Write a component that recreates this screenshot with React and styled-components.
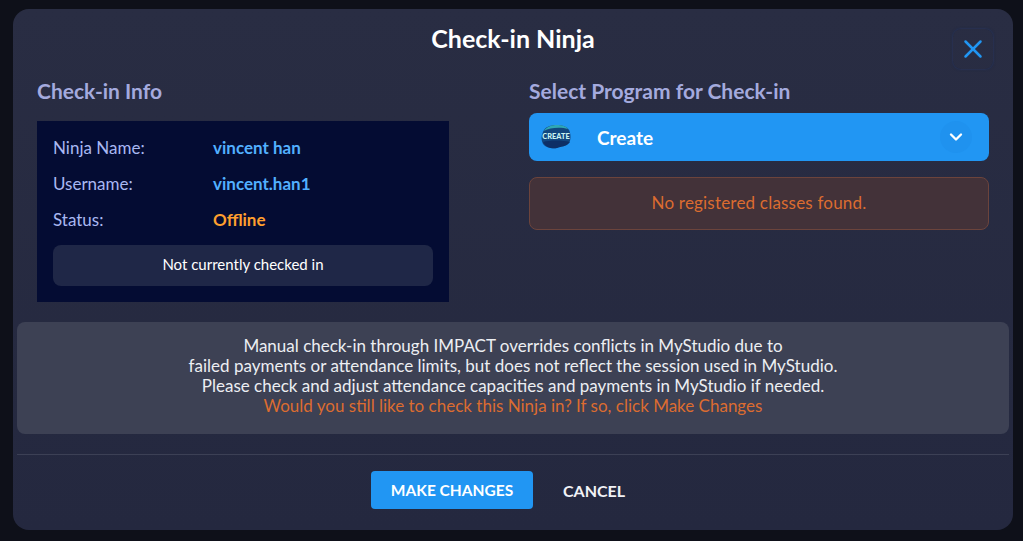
import React from 'react'
import styled, { createGlobalStyle } from 'styled-components'
import { X, ChevronDown } from 'lucide-react'

const GlobalStyle = createGlobalStyle`
    html, body {
        margin: 0;
        height: 100%;
        background: #0e1019;
        font-family: "Lato", "Noto Sans", sans-serif;
    }
`

function ProgramLogo() {
    return (
        <svg width="32" height="28" viewBox="0 0 32 28">
            <path d="M3 9 C5 4 10 2 16 2 C21 2 27 3 29 7 C31 11 31 17 29 20 C26 24 21 23 17 25 C12 26 6 25 3 21 C1 17 1 13 3 9 Z" fill="#12467f" />
            <path d="M4 8 C7 3 12 2 17 2 C22 2 26 3 28 6 C22 4 10 4 4 8 Z" fill="#2fa7b5" />
            <path d="M3 19 C10 17 22 17 30 19 C26 24 21 23 17 25 C12 26 6 25 3 19 Z" fill="#0d2f66" />
            <text x="16" y="16" textAnchor="middle" fontSize="7.4" fontWeight="900" fill="#c9f3f2" fontFamily="Lato, sans-serif">CREATE</text>
        </svg>
    )
}

function App() {
    return (
        <>
            <GlobalStyle />
            <Modal>
                <Title>Check-in Ninja</Title>
                <CloseButton><X size={30} strokeWidth={2} /></CloseButton>
                <Columns>
                    <LeftColumn>
                        <SectionTitle>Check-in Info</SectionTitle>
                        <InfoCard>
                            <InfoRow>
                                <InfoLabel>Ninja Name:</InfoLabel>
                                <InfoValue>vincent han</InfoValue>
                            </InfoRow>
                            <InfoRow>
                                <InfoLabel>Username:</InfoLabel>
                                <InfoValue>vincent.han1</InfoValue>
                            </InfoRow>
                            <InfoRow>
                                <InfoLabel>Status:</InfoLabel>
                                <InfoValue $offline>Offline</InfoValue>
                            </InfoRow>
                            <StatusBox>Not currently checked in</StatusBox>
                        </InfoCard>
                    </LeftColumn>
                    <RightColumn>
                        <SectionTitle>Select Program for Check-in</SectionTitle>
                        <ProgramSelect>
                            <LogoWrap><ProgramLogo /></LogoWrap>
                            <ProgramName>Create</ProgramName>
                            <Chevron><ChevronDown size={20} strokeWidth={2.8} /></Chevron>
                        </ProgramSelect>
                        <ErrorBox>No registered classes found.</ErrorBox>
                    </RightColumn>
                </Columns>
                <Notice>
                    Manual check-in through IMPACT overrides conflicts in MyStudio due to<br />
                    failed payments or attendance limits, but does not reflect the session used in MyStudio.<br />
                    Please check and adjust attendance capacities and payments in MyStudio if needed.<br />
                    <NoticeAsk>Would you still like to check this Ninja in? If so, click Make Changes</NoticeAsk>
                </Notice>
                <Footer>
                    <PrimaryButton>MAKE CHANGES</PrimaryButton>
                    <CancelButton>CANCEL</CancelButton>
                </Footer>
            </Modal>
        </>
    )
}

export default App

const Modal = styled.div`
    position: relative;
    box-sizing: border-box;
    width: 1000px;
    height: 521px;
    margin: 9px 0 0 13px;
    padding: 0 4px;
    border-radius: 16px;
    background: linear-gradient(180deg, #292d43 0%, #24283f 100%);
    color: #fff;
`

const Title = styled.h2`
    margin: 0;
    padding-top: 14px;
    height: 50px;
    box-sizing: border-box;
    text-align: center;
    font-size: 25px;
    line-height: 30px;
    font-weight: 700;
    color: #fff;
`

const CloseButton = styled.button`
    position: absolute;
    top: 20px;
    right: 20px;
    width: 40px;
    height: 40px;
    display: flex;
    align-items: center;
    justify-content: center;
    padding: 0;
    border: none;
    border-radius: 8px;
    background: transparent;
    box-shadow: 0 0 0 1px #272f4e, 0 0 3px rgba(28, 44, 82, 0.9);
    color: #2196f3;
`

const Columns = styled.div`
    display: flex;
    padding: 19px 20px 0;
    height: 244px;
`

const LeftColumn = styled.div`
    width: 412px;
    margin-right: 80px;
`

const RightColumn = styled.div`
    width: 460px;
`

const SectionTitle = styled.h3`
    margin: 0;
    height: 26px;
    font-size: 21px;
    line-height: 26px;
    font-weight: 700;
    color: #a4aade;
`

const InfoCard = styled.div`
    box-sizing: border-box;
    height: 181px;
    margin-top: 17px;
    padding: 9px 16px 0;
    background: #040c33;
`

const InfoRow = styled.div`
    display: flex;
    align-items: center;
    height: 36px;
    font-size: 17px;
    position: relative;
    top: -1px;
`

const InfoLabel = styled.span`
    width: 160px;
    color: #a9b8f2;
`

const InfoValue = styled.span`
    font-weight: 700;
    color: ${props => (props.$offline ? '#ff9f2e' : '#52b0ff')};
`

const StatusBox = styled.div`
    height: 41px;
    margin-top: 7px;
    border-radius: 8px;
    background: #1f2747;
    text-align: center;
    font-size: 15px;
    line-height: 38px;
    color: #fff;
`

const ProgramSelect = styled.div`
    display: flex;
    align-items: center;
    height: 48px;
    margin-top: 9px;
    padding: 0 17px 0 11px;
    border-radius: 8px;
    background: #2196f3;
`

const LogoWrap = styled.div`
    display: flex;
    width: 57px;
`

const ProgramName = styled.span`
    flex: 1;
    font-size: 19px;
    font-weight: 700;
    color: #fff;
`

const Chevron = styled.div`
    display: flex;
    align-items: center;
    justify-content: center;
    width: 32px;
    height: 32px;
    border-radius: 50%;
    background: #1f92ef;
    color: #fff;
`

const ErrorBox = styled.div`
    box-sizing: border-box;
    height: 53px;
    margin-top: 16px;
    border: 1px solid #6c443c;
    border-radius: 8px;
    background: #433239;
    text-align: center;
    font-size: 17px;
    letter-spacing: 0.2px;
    line-height: 49px;
    color: #dc6c30;
`

const Notice = styled.div`
    box-sizing: border-box;
    height: 112px;
    padding: 14px 16px;
    border-radius: 8px;
    background: #3d4154;
    text-align: center;
    font-size: 17px;
    line-height: 20px;
    color: #eceef2;
`

const NoticeAsk = styled.span`
    color: #dc6c30;
`

const Footer = styled.div`
    display: flex;
    justify-content: center;
    gap: 20px;
    margin-top: 20px;
    padding-top: 16px;
    padding-right: 20px;
    border-top: 1px solid #3c4055;
`

const PrimaryButton = styled.button`
    width: 162px;
    height: 38px;
    border: none;
    border-radius: 4px;
    background: #2196f3;
    font-family: inherit;
    font-size: 15.5px;
    font-weight: 700;
    color: #fff;
`

const CancelButton = styled.button`
    width: 82px;
    height: 38px;
    border: none;
    border-radius: 4px;
    background: transparent;
    font-family: inherit;
    font-size: 16px;
    font-weight: 700;
    color: #f1f2f6;
`
